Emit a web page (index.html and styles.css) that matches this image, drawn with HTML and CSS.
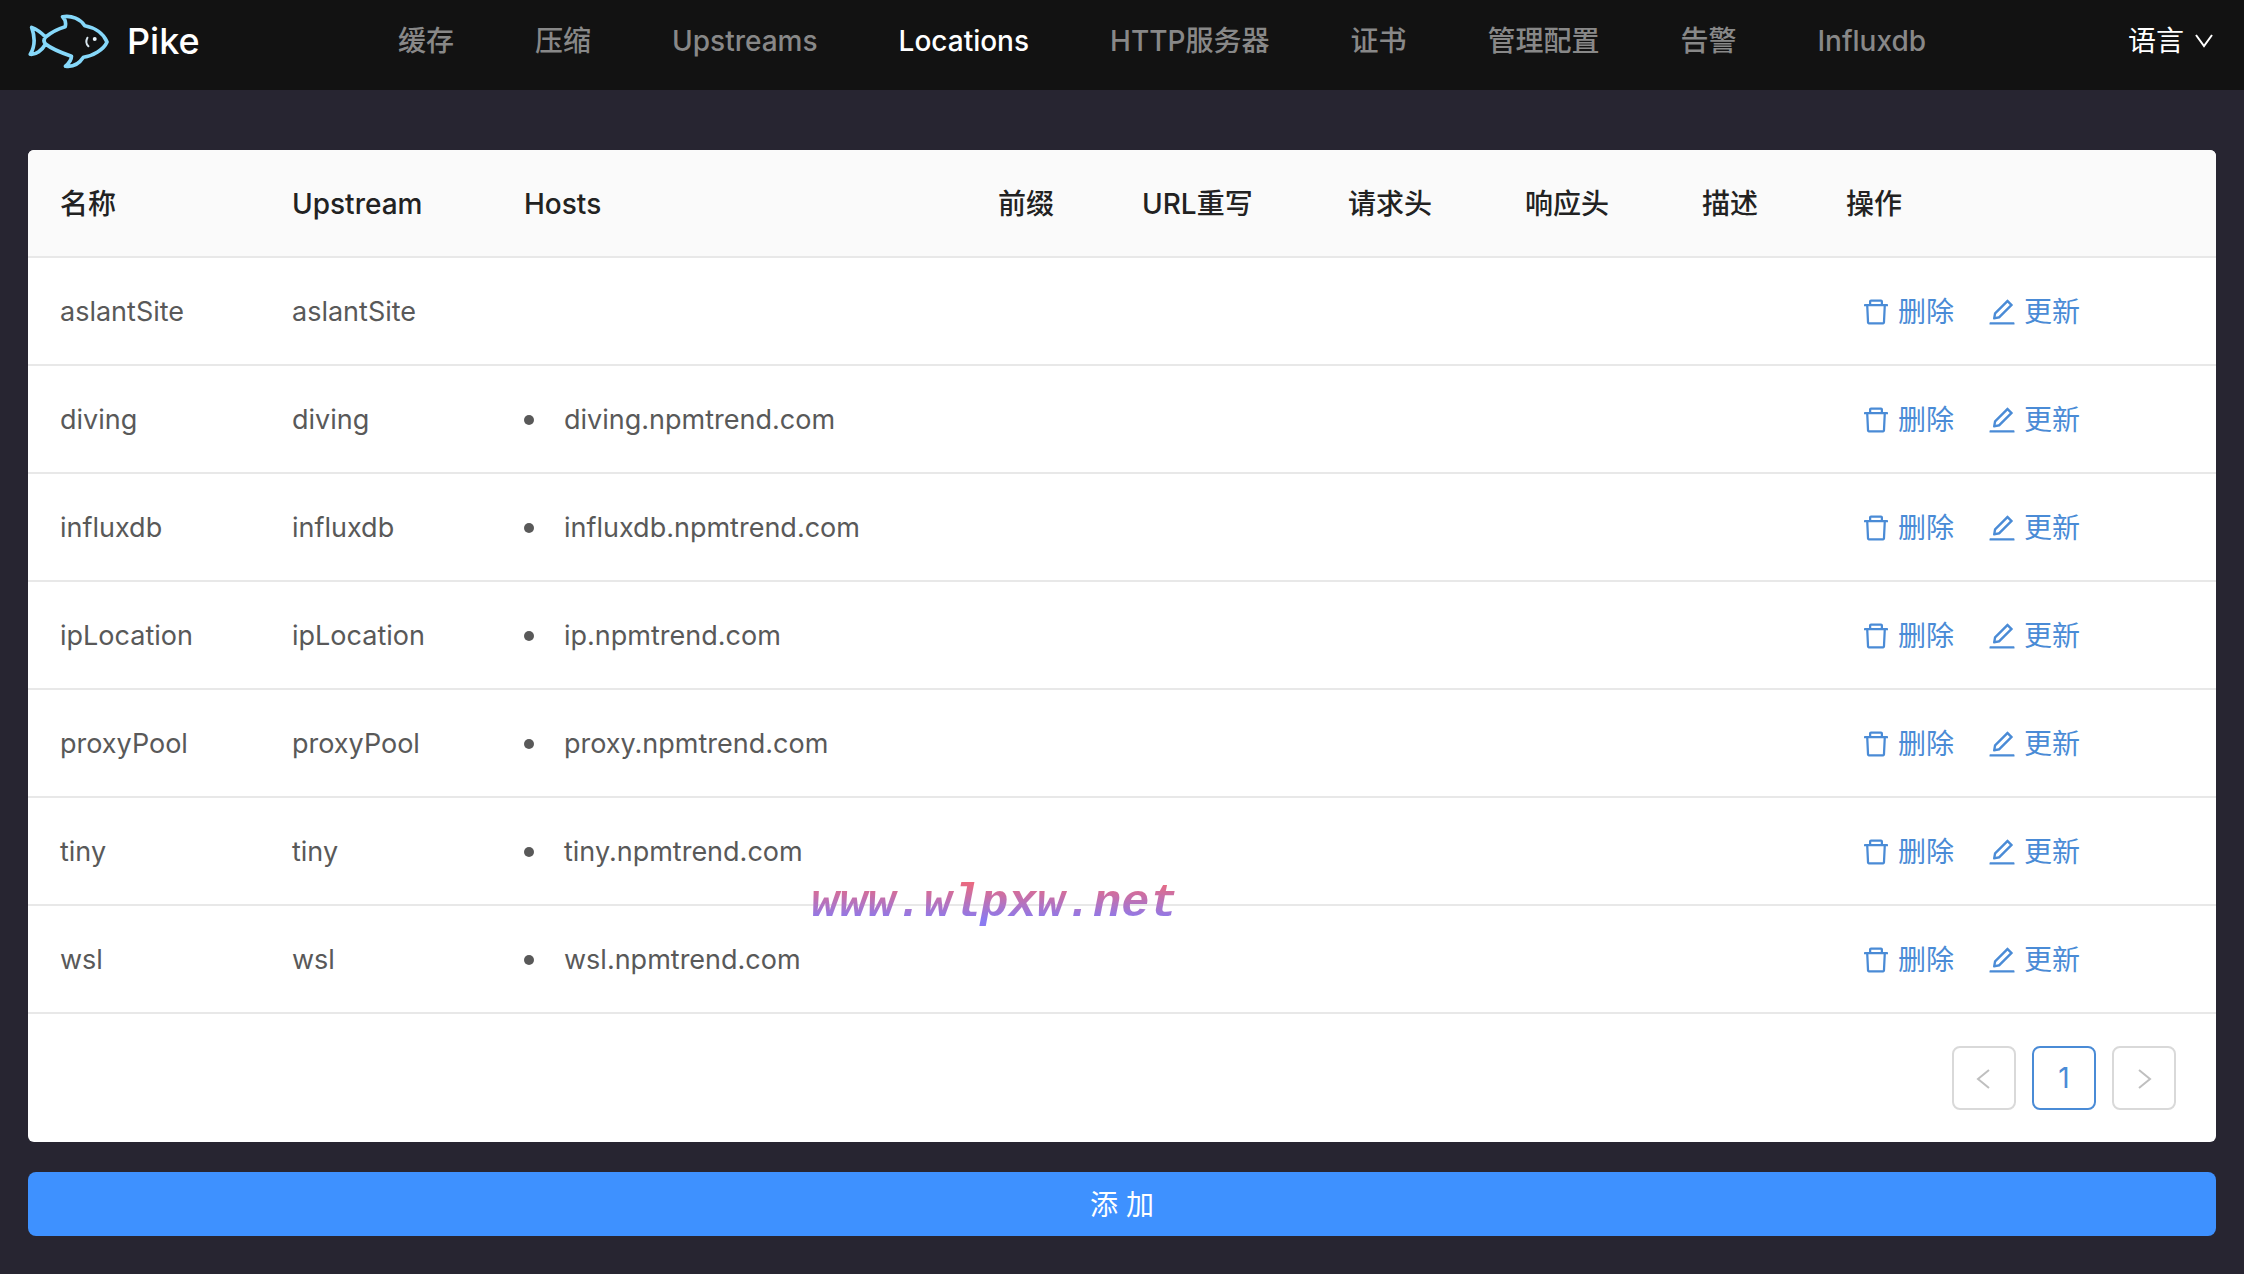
FILE: index.html
```html
<!DOCTYPE html>
<html lang="zh-CN">
<head>
<meta charset="utf-8">
<meta name="viewport" content="width=device-width, initial-scale=1">
<title>Pike - Locations</title>
<link rel="stylesheet" href="styles.css">
</head>
<body>
<svg class="sprite" aria-hidden="true">
  <symbol id="icon-delete" viewBox="64 64 896 896"><path d="M360 184h-8c4.400 0 8-3.600 8-8v8h304v-8c0 4.400 3.600 8 8 8h-8v72h72v-80c0-35.300-28.700-64-64-64H352c-35.300 0-64 28.700-64 64v80h72v-72zm504 72H160c-17.700 0-32 14.300-32 32v32c0 4.400 3.600 8 8 8h60.400l24.700 523c1.600 34.100 29.800 61 63.900 61h454c34.200 0 62.300-26.800 63.900-61l24.700-523H888c4.400 0 8-3.600 8-8v-32c0-17.700-14.300-32-32-32zM731.300 840H292.700l-24.200-512h487l-24.200 512z"/></symbol>
  <symbol id="icon-edit" viewBox="64 64 896 896"><path d="M257.700 752c2 0 4-.2 6-.5L431.900 722c2-.4 3.900-1.300 5.300-2.800l423.900-423.900a9.960 9.960 0 0 0 0-14.100L694.900 114.900c-1.900-1.900-4.400-2.900-7.100-2.900s-5.200 1-7.100 2.900L256.800 538.800c-1.500 1.500-2.400 3.300-2.800 5.300l-29.500 168.200a33.500 33.500 0 0 0 9.400 29.800c6.600 6.400 14.900 9.900 23.800 9.900zm67.400-174.400L687.800 215l73.300 73.300-362.700 362.600-88.900 15.700 15.600-89zM880 836H144c-17.700 0-32 14.300-32 32v36c0 4.400 3.600 8 8 8h784c4.400 0 8-3.600 8-8v-36c0-17.700-14.300-32-32-32z"/></symbol>
</svg>

<header class="header">
  <a class="brand" href="#">
    <svg class="logo" viewBox="24 36 244 168" aria-hidden="true">
      <path class="logo-body" d="M35 79C45 107 45 137 31 160C48 162 66 148 77 129C98 146 126 156 155 166C155 178 147 187 137 196C160 199 179 187 191 169C220 165 252 146 262 123C252 98 226 80 195 74C182 54 156 42 128 47C137 56 139 66 136 77C112 84 94 94 77 108C65 96 52 85 35 79ZM77 108C70 116 70 122 77 129"/>
      <path class="logo-gill" d="M203 110C198 119 199 129 206 136"/>
      <circle class="logo-eye" cx="225" cy="114" r="6"/>
    </svg>
    <span>Pike</span>
  </a>
  <nav class="nav">
    <a href="#">缓存</a>
    <a href="#">压缩</a>
    <a href="#">Upstreams</a>
    <a href="#" aria-current="page">Locations</a>
    <a href="#">HTTP服务器</a>
    <a href="#">证书</a>
    <a href="#">管理配置</a>
    <a href="#">告警</a>
    <a href="#">Influxdb</a>
  </nav>
  <button class="language" type="button">语言
    <svg class="chevron" viewBox="0 0 20 20" aria-hidden="true"><path d="M2 4L10 15L18 4"/></svg>
  </button>
</header>

<main class="main">
  <section class="card">
    <table class="table">
      <colgroup>
        <col class="col-name"><col class="col-name"><col class="col-hosts"><col class="col-prefix"><col class="col-rewrite"><col class="col-headers"><col class="col-headers"><col class="col-prefix"><col>
      </colgroup>
      <thead>
        <tr><th>名称</th><th>Upstream</th><th>Hosts</th><th>前缀</th><th>URL重写</th><th>请求头</th><th>响应头</th><th>描述</th><th>操作</th></tr>
      </thead>
      <tbody>
        <tr><td>aslantSite</td><td>aslantSite</td><td></td><td></td><td></td><td></td><td></td><td></td>
          <td><div class="actions"><a href="#"><svg><use href="#icon-delete"/></svg>删除</a><a href="#"><svg><use href="#icon-edit"/></svg>更新</a></div></td></tr>
        <tr><td>diving</td><td>diving</td><td><ul class="hosts"><li>diving.npmtrend.com</li></ul></td><td></td><td></td><td></td><td></td><td></td>
          <td><div class="actions"><a href="#"><svg><use href="#icon-delete"/></svg>删除</a><a href="#"><svg><use href="#icon-edit"/></svg>更新</a></div></td></tr>
        <tr><td>influxdb</td><td>influxdb</td><td><ul class="hosts"><li>influxdb.npmtrend.com</li></ul></td><td></td><td></td><td></td><td></td><td></td>
          <td><div class="actions"><a href="#"><svg><use href="#icon-delete"/></svg>删除</a><a href="#"><svg><use href="#icon-edit"/></svg>更新</a></div></td></tr>
        <tr><td>ipLocation</td><td>ipLocation</td><td><ul class="hosts"><li>ip.npmtrend.com</li></ul></td><td></td><td></td><td></td><td></td><td></td>
          <td><div class="actions"><a href="#"><svg><use href="#icon-delete"/></svg>删除</a><a href="#"><svg><use href="#icon-edit"/></svg>更新</a></div></td></tr>
        <tr><td>proxyPool</td><td>proxyPool</td><td><ul class="hosts"><li>proxy.npmtrend.com</li></ul></td><td></td><td></td><td></td><td></td><td></td>
          <td><div class="actions"><a href="#"><svg><use href="#icon-delete"/></svg>删除</a><a href="#"><svg><use href="#icon-edit"/></svg>更新</a></div></td></tr>
        <tr><td>tiny</td><td>tiny</td><td><ul class="hosts"><li>tiny.npmtrend.com</li></ul></td><td></td><td></td><td></td><td></td><td></td>
          <td><div class="actions"><a href="#"><svg><use href="#icon-delete"/></svg>删除</a><a href="#"><svg><use href="#icon-edit"/></svg>更新</a></div></td></tr>
        <tr><td>wsl</td><td>wsl</td><td><ul class="hosts"><li>wsl.npmtrend.com</li></ul></td><td></td><td></td><td></td><td></td><td></td>
          <td><div class="actions"><a href="#"><svg><use href="#icon-delete"/></svg>删除</a><a href="#"><svg><use href="#icon-edit"/></svg>更新</a></div></td></tr>
      </tbody>
    </table>
    <nav class="pagination" aria-label="分页">
      <button type="button" disabled aria-label="上一页"><svg class="arrow" viewBox="0 0 20 24" aria-hidden="true"><path d="M15 4L4 13L15 22"/></svg></button>
      <button type="button" class="current" aria-current="page">1</button>
      <button type="button" disabled aria-label="下一页"><svg class="arrow" viewBox="0 0 20 24" aria-hidden="true"><path d="M5 4L16 13L5 22"/></svg></button>
    </nav>
    <div class="watermark">www.wlpxw.net</div>
  </section>
  <button class="add" type="button">添 加</button>
</main>
</body>
</html>
```
FILE: styles.css
```css
* {
  box-sizing: border-box;
}

body {
  margin: 0;
  min-height: 100vh;
  background: #272531;
  color: #595959;
  font-family: Inter, "Noto Sans CJK SC", sans-serif;
  font-size: 28px;
  line-height: 42px;
}

a {
  color: inherit;
  text-decoration: none;
}

button {
  font: inherit;
  cursor: pointer;
}

.sprite {
  display: none;
}

/* Header */
.header {
  display: flex;
  align-items: center;
  height: 90px;
  padding: 0 30px 8px 28px;
  background: #121212;
  color: #fff;
}

.brand {
  display: flex;
  align-items: center;
  gap: 18px;
  width: 330px;
  font-size: 36px;
  font-weight: 500;
}

.logo {
  width: 81px;
  height: 56px;
}

.logo-body {
  fill: none;
  stroke: #86d8fa;
  stroke-width: 11;
  stroke-linejoin: round;
}

.logo-gill {
  fill: none;
  stroke: #d8e6ee;
  stroke-width: 6;
  stroke-linecap: round;
}

.logo-eye {
  fill: #e8f4fa;
}

.nav {
  display: flex;
  flex: 1;
  gap: 1px;
  color: #888;
  font-weight: 500;
  white-space: nowrap;
}

.nav a {
  padding: 0 40px;
}

.nav a[aria-current] {
  color: #fff;
}

.language {
  display: flex;
  align-items: center;
  gap: 10px;
  padding: 0;
  border: 0;
  background: none;
  color: #fff;
}

.chevron {
  width: 20px;
  height: 20px;
  fill: none;
  stroke: currentColor;
  stroke-width: 2;
}

/* Content */
.main {
  padding: 60px 28px 38px;
}

.card {
  position: relative;
  margin-bottom: 30px;
  overflow: hidden;
  border-radius: 6px;
  background: #fff;
}

.table {
  width: 100%;
  table-layout: fixed;
  border-collapse: separate;
  border-spacing: 0;
}

.col-name { width: 232px; }
.col-hosts { width: 474px; }
.col-prefix { width: 144px; }
.col-rewrite { width: 206px; }
.col-headers { width: 177px; }

.table th,
.table td {
  height: 108px;
  padding: 2px 32px 0;
  border-bottom: 2px solid #e8e8e8;
  text-align: left;
  white-space: nowrap;
}

.table th {
  background: #fafafa;
  color: #222;
  font-weight: 500;
}

.table td {
  font-size: 27px;
}

.hosts {
  margin: 0;
  padding: 0;
  list-style: none;
}

.hosts li {
  display: flex;
  align-items: center;
  gap: 30px;
}

.hosts li::before {
  width: 10px;
  height: 10px;
  border-radius: 50%;
  background: #595959;
  content: "";
}

.actions {
  display: flex;
  gap: 2px;
  color: #4a8bd6;
  font-size: 28px;
}

.actions a {
  display: flex;
  align-items: center;
  gap: 8px;
  padding: 0 16px;
}

.actions svg {
  width: 28px;
  height: 28px;
  fill: currentColor;
}

.pagination {
  display: flex;
  justify-content: flex-end;
  gap: 16px;
  padding: 32px 40px;
}

.pagination button {
  display: flex;
  align-items: center;
  justify-content: center;
  width: 64px;
  height: 64px;
  padding: 0;
  border: 2px solid #d9d9d9;
  border-radius: 8px;
  background: #fff;
  color: #bfbfbf;
}

.pagination .current {
  border-color: #4a8bd6;
  color: #4a8bd6;
}

.arrow {
  width: 20px;
  height: 24px;
  fill: none;
  stroke: currentColor;
  stroke-width: 2;
}

.watermark {
  position: absolute;
  top: 728px;
  left: 783px;
  background: linear-gradient(#ea6a80 10%, #8a7af0 80%);
  background-clip: text;
  color: transparent;
  font: italic bold 47px/52px "Liberation Mono", monospace;
  pointer-events: none;
}

.add {
  display: block;
  width: 100%;
  height: 64px;
  padding: 2px 0 0;
  border: 0;
  border-radius: 8px;
  background: #3e91ff;
  color: #fff;
}
```
